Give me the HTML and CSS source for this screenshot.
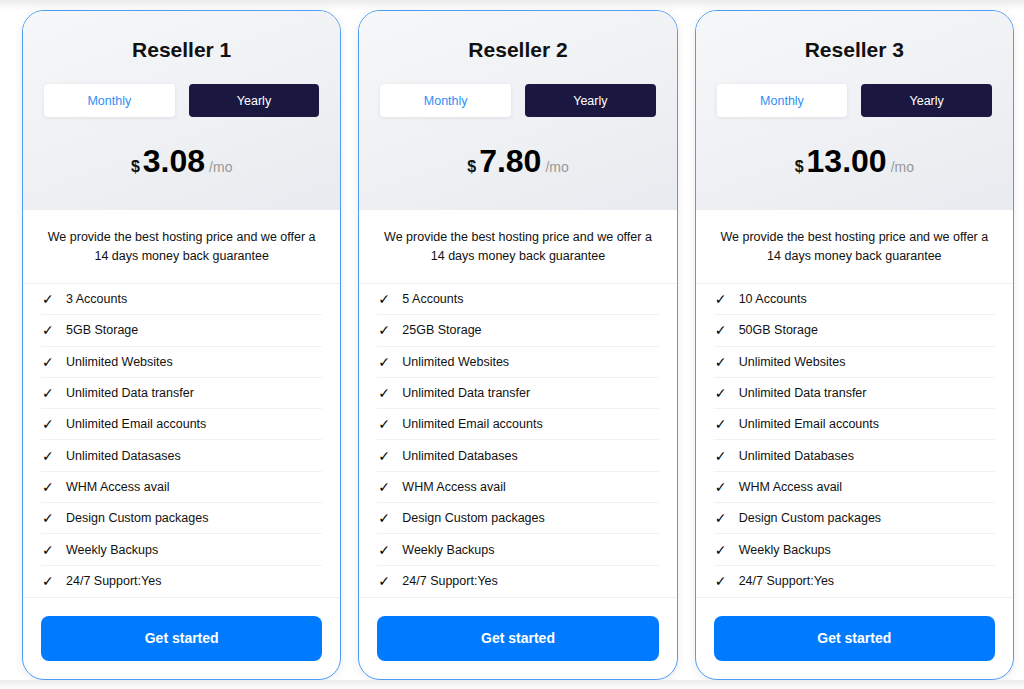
FILE: index.html
```html
<!DOCTYPE html>
<html lang="en">
<head>
  <meta charset="UTF-8" />
  <meta name="viewport" content="width=device-width, initial-scale=1.0"/>
  <title>Reseller Hosting</title>
  <link rel="stylesheet" href="styles.css">
</head>
<body>

  <div class="plans">

    <div class="plan">
      <div class="plan-head">
        <h2>Reseller 1</h2>
        <div class="toggle">
          <button class="toggle-btn">Monthly</button>
          <button class="toggle-btn active">Yearly</button>
        </div>
        <div class="price"><span class="cur">$</span><span class="amount">3.08</span><span class="per">/mo</span></div>
      </div>
      <p class="desc">We provide the best hosting price and we offer a 14 days money back guarantee</p>
      <ul class="features">
        <li><span class="check">✓</span>3 Accounts</li>
        <li><span class="check">✓</span>5GB Storage</li>
        <li><span class="check">✓</span>Unlimited Websites</li>
        <li><span class="check">✓</span>Unlimited Data transfer</li>
        <li><span class="check">✓</span>Unlimited Email accounts</li>
        <li><span class="check">✓</span>Unlimited Datasases</li>
        <li><span class="check">✓</span>WHM Access avail</li>
        <li><span class="check">✓</span>Design Custom packages</li>
        <li><span class="check">✓</span>Weekly Backups</li>
        <li><span class="check">✓</span>24/7 Support:Yes</li>
      </ul>
      <div class="plan-foot">
        <button class="start-btn">Get started</button>
      </div>
    </div>

    <div class="plan">
      <div class="plan-head">
        <h2>Reseller 2</h2>
        <div class="toggle">
          <button class="toggle-btn">Monthly</button>
          <button class="toggle-btn active">Yearly</button>
        </div>
        <div class="price"><span class="cur">$</span><span class="amount">7.80</span><span class="per">/mo</span></div>
      </div>
      <p class="desc">We provide the best hosting price and we offer a 14 days money back guarantee</p>
      <ul class="features">
        <li><span class="check">✓</span>5 Accounts</li>
        <li><span class="check">✓</span>25GB Storage</li>
        <li><span class="check">✓</span>Unlimited Websites</li>
        <li><span class="check">✓</span>Unlimited Data transfer</li>
        <li><span class="check">✓</span>Unlimited Email accounts</li>
        <li><span class="check">✓</span>Unlimited Databases</li>
        <li><span class="check">✓</span>WHM Access avail</li>
        <li><span class="check">✓</span>Design Custom packages</li>
        <li><span class="check">✓</span>Weekly Backups</li>
        <li><span class="check">✓</span>24/7 Support:Yes</li>
      </ul>
      <div class="plan-foot">
        <button class="start-btn">Get started</button>
      </div>
    </div>

    <div class="plan">
      <div class="plan-head">
        <h2>Reseller 3</h2>
        <div class="toggle">
          <button class="toggle-btn">Monthly</button>
          <button class="toggle-btn active">Yearly</button>
        </div>
        <div class="price"><span class="cur">$</span><span class="amount">13.00</span><span class="per">/mo</span></div>
      </div>
      <p class="desc">We provide the best hosting price and we offer a 14 days money back guarantee</p>
      <ul class="features">
        <li><span class="check">✓</span>10 Accounts</li>
        <li><span class="check">✓</span>50GB Storage</li>
        <li><span class="check">✓</span>Unlimited Websites</li>
        <li><span class="check">✓</span>Unlimited Data transfer</li>
        <li><span class="check">✓</span>Unlimited Email accounts</li>
        <li><span class="check">✓</span>Unlimited Databases</li>
        <li><span class="check">✓</span>WHM Access avail</li>
        <li><span class="check">✓</span>Design Custom packages</li>
        <li><span class="check">✓</span>Weekly Backups</li>
        <li><span class="check">✓</span>24/7 Support:Yes</li>
      </ul>
      <div class="plan-foot">
        <button class="start-btn">Get started</button>
      </div>
    </div>

  </div>

</body>
</html>
```

FILE: styles.css
```css
* {
  box-sizing: border-box;
}

body {
  margin: 0;
  font-family: "Liberation Sans", Arial, sans-serif;
  background: linear-gradient(#ebebeb, #ffffff 10px);
  color: #111;
}

.plans {
  display: grid;
  grid-template-columns: repeat(3, 1fr);
  gap: 17px;
  padding: 10px 10px 0 22px;
}

.plan {
  border: 1px solid #4f9cf6;
  border-radius: 22px;
  overflow: hidden;
  background: #fff;
  box-shadow: 0 2px 10px rgba(0, 0, 0, 0.08);
}

.plan-head {
  height: 199px;
  padding: 26px 21px 0;
  background: linear-gradient(160deg, #f6f7f9 0%, #eef0f3 60%, #e8ebef 100%);
  text-align: center;
}

.plan-head h2 {
  margin: 0;
  font-size: 21px;
  line-height: 26px;
  font-weight: bold;
  color: #111;
}

.toggle {
  display: flex;
  gap: 14px;
  margin-top: 21px;
}

.toggle-btn {
  flex: 1;
  height: 33px;
  border: none;
  border-radius: 4px;
  background: #fff;
  color: #2f8ef7;
  font-family: inherit;
  font-size: 12.5px;
  box-shadow: 0 1px 4px rgba(0, 0, 0, 0.08);
}

.toggle-btn.active {
  background: #1a1840;
  color: #fff;
  box-shadow: none;
}

.price {
  margin-top: 26px;
  display: flex;
  justify-content: center;
  align-items: baseline;
}

.price .cur {
  font-size: 16px;
  font-weight: bold;
  margin-right: 3px;
}

.price .amount {
  font-size: 32px;
  font-weight: bold;
  color: #000;
}

.price .per {
  font-size: 14px;
  color: #999;
  margin-left: 4px;
}

.desc {
  margin: 0;
  padding: 18px 24px 17px;
  font-size: 12.5px;
  line-height: 19px;
  text-align: center;
  color: #111;
  border-bottom: 1px solid #eceef0;
}

.features {
  list-style: none;
  margin: 0;
  padding: 0 18px;
  border-bottom: 1px solid #eceef0;
}

.features li {
  display: flex;
  align-items: center;
  height: 31.3px;
  font-size: 12.5px;
  color: #111;
  border-bottom: 1px solid #f0f1f3;
}

.features li:last-child {
  border-bottom: none;
}

.check {
  width: 25px;
  padding-left: 1px;
  font-family: "DejaVu Sans", sans-serif;
  font-size: 14px;
  font-weight: bold;
  color: #000;
}

.plan-foot {
  padding: 18px 18px 18px;
}

.start-btn {
  width: 100%;
  height: 45px;
  border: none;
  border-radius: 8px;
  background: #007bff;
  color: #fff;
  font-family: inherit;
  font-size: 14px;
  font-weight: bold;
}
```
